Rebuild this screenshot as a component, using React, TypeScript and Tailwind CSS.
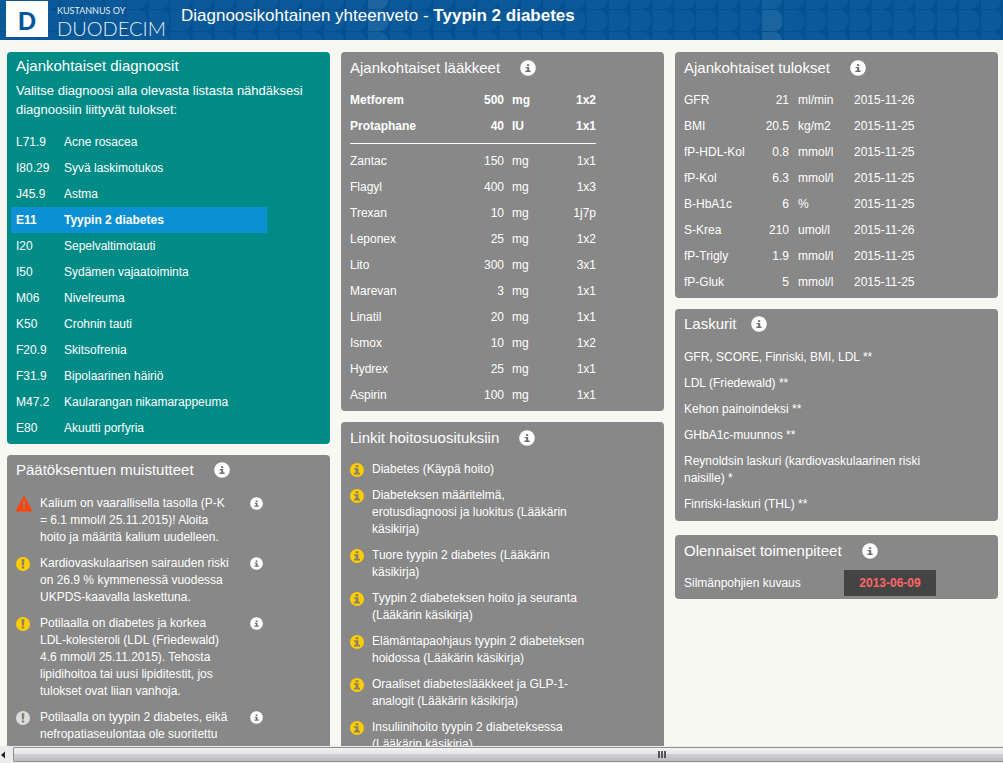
import React from "react";

const diagnoses = [
  ["L71.9", "Acne rosacea"],
  ["I80.29", "Syvä laskimotukos"],
  ["J45.9", "Astma"],
  ["E11", "Tyypin 2 diabetes"],
  ["I20", "Sepelvaltimotauti"],
  ["I50", "Sydämen vajaatoiminta"],
  ["M06", "Nivelreuma"],
  ["K50", "Crohnin tauti"],
  ["F20.9", "Skitsofrenia"],
  ["F31.9", "Bipolaarinen häiriö"],
  ["M47.2", "Kaularangan nikamarappeuma"],
  ["E80", "Akuutti porfyria"],
];

const relatedMeds = [
  ["Metforem", "500", "mg", "1x2"],
  ["Protaphane", "40", "IU", "1x1"],
];

const otherMeds = [
  ["Zantac", "150", "mg", "1x1"],
  ["Flagyl", "400", "mg", "1x3"],
  ["Trexan", "10", "mg", "1j7p"],
  ["Leponex", "25", "mg", "1x2"],
  ["Lito", "300", "mg", "3x1"],
  ["Marevan", "3", "mg", "1x1"],
  ["Linatil", "20", "mg", "1x1"],
  ["Ismox", "10", "mg", "1x2"],
  ["Hydrex", "25", "mg", "1x1"],
  ["Aspirin", "100", "mg", "1x1"],
];

const results = [
  ["GFR", "21", "ml/min", "2015-11-26"],
  ["BMI", "20.5", "kg/m2", "2015-11-25"],
  ["fP-HDL-Kol", "0.8", "mmol/l", "2015-11-25"],
  ["fP-Kol", "6.3", "mmol/l", "2015-11-25"],
  ["B-HbA1c", "6", "%", "2015-11-25"],
  ["S-Krea", "210", "umol/l", "2015-11-26"],
  ["fP-Trigly", "1.9", "mmol/l", "2015-11-25"],
  ["fP-Gluk", "5", "mmol/l", "2015-11-25"],
];

type Level = "danger" | "warning" | "note";

const reminders: { level: Level; text: string }[] = [
  {
    level: "danger",
    text: "Kalium on vaarallisella tasolla (P-K\n= 6.1 mmol/l 25.11.2015)! Aloita\nhoito ja määritä kalium uudelleen.",
  },
  {
    level: "warning",
    text: "Kardiovaskulaarisen sairauden riski\non 26.9 % kymmenessä vuodessa\nUKPDS-kaavalla laskettuna.",
  },
  {
    level: "warning",
    text: "Potilaalla on diabetes ja korkea\nLDL-kolesteroli (LDL (Friedewald)\n4.6 mmol/l 25.11.2015). Tehosta\nlipidihoitoa tai uusi lipiditestit, jos\ntulokset ovat liian vanhoja.",
  },
  {
    level: "note",
    text: "Potilaalla on tyypin 2 diabetes, eikä\nnefropatiaseulontaa ole suoritettu",
  },
];

const guidelines = [
  "Diabetes (Käypä hoito)",
  "Diabeteksen määritelmä,\nerotusdiagnoosi ja luokitus (Lääkärin\nkäsikirja)",
  "Tuore tyypin 2 diabetes (Lääkärin\nkäsikirja)",
  "Tyypin 2 diabeteksen hoito ja seuranta\n(Lääkärin käsikirja)",
  "Elämäntapaohjaus tyypin 2 diabeteksen\nhoidossa (Lääkärin käsikirja)",
  "Oraaliset diabeteslääkkeet ja GLP-1-\nanalogit (Lääkärin käsikirja)",
  "Insuliinihoito tyypin 2 diabeteksessa\n(Lääkärin käsikirja)",
];

const calculators = [
  "GFR, SCORE, Finriski, BMI, LDL **",
  "LDL (Friedewald) **",
  "Kehon painoindeksi **",
  "GHbA1c-muunnos **",
  "Reynoldsin laskuri (kardiovaskulaarinen riski\nnaisille) *",
  "Finriski-laskuri (THL) **",
];

function InfoIcon({ className }: { className: string }) {
  return (
    <svg className={className} viewBox="0 0 16 16" aria-hidden="true">
      <circle cx="8" cy="8" r="7.800" fill="#ffffff" />
      <path d="M7 4.200h2.200v1.800H7zM5.600 7h3.600v3.600h1.400V12H5.400v-1.400h1.800V8.300H5.600z" fill="#6f6f6f" />
    </svg>
  );
}

function LinkIcon() {
  return (
    <svg className="size-3.5" viewBox="0 0 14 14" aria-hidden="true">
      <circle cx="7" cy="7" r="7" fill="#ffcc00" />
      <path d="M5.600 2.200h2.800v2H5.600zM4 5.200h4.400v4.600H10v1.700H4V9.800h1.600V6.800H4z" fill="#84806a" />
    </svg>
  );
}

function LevelIcon({ level }: { level: Level }) {
  if (level === "danger") {
    return (
      <svg className="size-4" viewBox="0 0 16 16" aria-hidden="true">
        <path d="M8 0.300c.5 0 .8.200 1 .6l6.700 13c.4.800 0 1.600-.9 1.600H1.200c-.9 0-1.300-.8-.9-1.600L7 .9c.2-.4.500-.6 1-.6z" fill="#ff4400" />
        <path d="M6.900 5h2.200l-.3 5H7.200zM7 11h2v2H7z" fill="#888888" />
      </svg>
    );
  }
  return (
    <svg
      className={level === "warning" ? "size-3.5 text-[#ffcc00]" : "size-3.5 text-[#dddddd]"}
      viewBox="0 0 14 14"
      aria-hidden="true"
    >
      <circle cx="7" cy="7" r="7" fill="currentColor" />
      <path d="M5.600 2.200h2.800L8 8.400H6zM5.800 9.400h2.400v2.200H5.800z" fill="#84806a" />
    </svg>
  );
}

type PanelProps = { title: string; snug?: boolean; closeIcon?: boolean; children: React.ReactNode };

function Panel({ title, snug, closeIcon, children }: PanelProps) {
  return (
    <section
      className={
        snug
          ? "flex flex-col gap-[9px] rounded bg-[#888888] px-[9px] py-[3px]"
          : "flex flex-col gap-[7px] rounded bg-[#888888] px-[9px] pt-1 pb-[3px]"
      }
    >
      <div className={closeIcon ? "flex h-6 items-center gap-3.5" : "flex h-6 items-center gap-5"}>
        <h2 className="text-[15px] leading-6">{title}</h2>
        <button type="button" aria-label={title}>
          <InfoIcon className="size-4" />
        </button>
      </div>
      {children}
    </section>
  );
}

function MedRows({ rows }: { rows: string[][] }) {
  return (
    <>
      {rows.map(([name, dose, unit, schedule]) => (
        <tr key={name} className="h-[26px]">
          <td className="w-28">{name}</td>
          <td className="w-[42px] text-right">{dose}</td>
          <td className="w-10 pl-2">{unit}</td>
          <td className="text-right">{schedule}</td>
        </tr>
      ))}
    </>
  );
}

function HeaderPattern() {
  return (
    <svg className="absolute inset-0 size-full" aria-hidden="true">
      <defs>
        <pattern id="tiles" x="762" y="10" width="21.9" height="22" patternUnits="userSpaceOnUse">
          <path d="M0 0H11C17 0 20.500 4 20.500 10.500S17 21 11 21H0Z" fill="#0b5998" />
        </pattern>
      </defs>
      <rect width="100%" height="100%" fill="url(#tiles)" />
      <g fill="#1b649f">
        <path d="M762 10h11c6 0 9.500 4 9.500 10.500s-3.500 10.500-9.500 10.500h-11z" />
        <path d="M762 32h11c5 0 8 3 9 8h-20z" />
        <path d="M368 0h20c-1 6-4 9-9 9h-11z" />
        <path d="M368 10h11c6 0 9.500 4 9.500 10.500s-3.500 10.500-9.500 10.500h-11z" />
      </g>
      <path d="M762 0h20c-1 6-4 9-9 9h-11zM368 32h11c5 0 8 3 9 8h-20z" fill="#135f9c" />
    </svg>
  );
}

function Logo() {
  return (
    <div className="flex h-10 items-start">
      <div className="mt-px flex h-9 w-[42px] items-center justify-center bg-white pt-1">
        <span className="font-['Lato',sans-serif] text-2xl leading-6 font-black text-[#07559a]">D</span>
      </div>
      <div className="flex w-[133px] flex-col pt-1.5 pl-[9px] font-['Lato',sans-serif] text-[#e4edf5]">
        <span className="text-[9px] leading-[10px]">KUSTANNUS OY</span>
        <span className="text-[20px] leading-6 font-light">DUODECIM</span>
      </div>
    </div>
  );
}

export default function App() {
  return (
    <div className="flex h-screen flex-col overflow-hidden bg-[#f7f8f2] font-['Liberation_Sans',Arial,sans-serif] text-xs text-white">
      <header className="relative flex h-10 shrink-0 bg-[#045192] pl-1.5">
        <HeaderPattern />
        <div className="relative flex">
          <Logo />
          <h1 className="text-[17px] leading-8">
            Diagnoosikohtainen yhteenveto - <b>Tyypin 2 diabetes</b>
          </h1>
        </div>
      </header>

      <main className="grid min-h-0 flex-1 grid-cols-3 items-start gap-[11px] overflow-hidden pt-3 pr-[5px] pl-[7px]">
        <div className="flex flex-col gap-[11px]">
          <section className="rounded bg-[#008b87] px-1 pt-0.5 pb-[3px]">
            <h2 className="px-[5px] text-[15px] leading-6">Ajankohtaiset diagnoosit</h2>
            <p className="mt-[3px] px-[5px] text-[13px] leading-[19px] whitespace-pre-line">
              {"Valitse diagnoosi alla olevasta listasta nähdäksesi\ndiagnoosiin liittyvät tulokset:"}
            </p>
            <ul className="mt-2.5 w-64">
              {diagnoses.map(([code, name]) => (
                <li key={code}>
                  <button
                    type="button"
                    className={
                      code === "E11"
                        ? "flex h-[26px] w-full items-center bg-[#0d8fd3] px-[5px] text-left font-bold"
                        : "flex h-[26px] w-full items-center px-[5px] text-left"
                    }
                  >
                    <span className="w-12">{code}</span>
                    <span>{name}</span>
                  </button>
                </li>
              ))}
            </ul>
          </section>

          <Panel title="Päätöksentuen muistutteet" snug>
            <ul>
              {reminders.map((r) => (
                <li key={r.text} className="flex items-start pt-1 pb-[5px] leading-[17px]">
                  <span className="flex h-[17px] w-6 items-center">
                    <LevelIcon level={r.level} />
                  </span>
                  <span className="w-[210px] whitespace-pre-line">{r.text}</span>
                  <button type="button" aria-label="Lisätietoja" className="flex h-4 items-center">
                    <InfoIcon className="size-[13px]" />
                  </button>
                </li>
              ))}
            </ul>
          </Panel>
        </div>

        <div className="flex flex-col gap-[11px]">
          <Panel title="Ajankohtaiset lääkkeet">
            <table className="w-[246px]">
              <tbody className="font-bold">
                <MedRows rows={relatedMeds} />
              </tbody>
              <tbody>
                <tr>
                  <td colSpan={4} className="h-[9px]">
                    <hr className="border-white" />
                  </td>
                </tr>
                <MedRows rows={otherMeds} />
              </tbody>
            </table>
          </Panel>

          <Panel title="Linkit hoitosuosituksiin">
            <ul>
              {guidelines.map((g) => (
                <li key={g} className="pt-1 pb-[5px] leading-[17px]">
                  <a href="#" className="flex items-start">
                    <span className="flex h-[17px] w-[22px] items-center">
                      <LinkIcon />
                    </span>
                    <span className="whitespace-pre-line">{g}</span>
                  </a>
                </li>
              ))}
            </ul>
          </Panel>
        </div>

        <div className="flex flex-col gap-[11px]">
          <Panel title="Ajankohtaiset tulokset">
            <table>
              <tbody>
                {results.map(([name, value, unit, date]) => (
                  <tr key={name} className="h-[26px]">
                    <td className="w-[70px]">{name}</td>
                    <td className="w-[35px] text-right">{value}</td>
                    <td className="w-[65px] pl-[9px]">{unit}</td>
                    <td>{date}</td>
                  </tr>
                ))}
              </tbody>
            </table>
          </Panel>

          <Panel title="Laskurit" snug closeIcon>
            <ul>
              {calculators.map((c) => (
                <li key={c} className="pt-1 pb-[5px] leading-[17px] whitespace-pre-line">
                  <a href="#">{c}</a>
                </li>
              ))}
            </ul>
          </Panel>

          <div className="pt-[3px]">
            <Panel title="Olennaiset toimenpiteet">
              <div className="flex h-[26px] items-center">
                <span className="w-40">Silmänpohjien kuvaus</span>
                <span className="flex h-[26px] w-[92px] items-center justify-center bg-[#444444] font-bold text-[#ff6666]">
                  2013-06-09
                </span>
              </div>
            </Panel>
          </div>
        </div>
      </main>

      <div className="flex h-[17px] shrink-0 bg-[#ececec]" aria-hidden="true">
        <div className="flex w-[13px] items-center justify-start">
          <svg className="h-2 w-1.5" viewBox="0 0 6 8">
            <path d="M5 0.500V7.500L1 4Z" fill="#222222" />
          </svg>
        </div>
        <div className="mt-px mb-px flex flex-1 items-center rounded-l-xs border-y border-l border-[#8e8e96] bg-[linear-gradient(#f3f3f3_0%,#e4e4e6_45%,#cfcfd1_50%,#bdbdc0_100%)]">
          <div className="flex w-full justify-center pl-[306px]">
            <svg className="h-2 w-2" viewBox="0 0 8 8">
              <path d="M0 0h2v7h-2zM3 0h2v7h-2zM6 0h2v7h-2z" fill="#55555c" />
            </svg>
          </div>
        </div>
      </div>
    </div>
  );
}
